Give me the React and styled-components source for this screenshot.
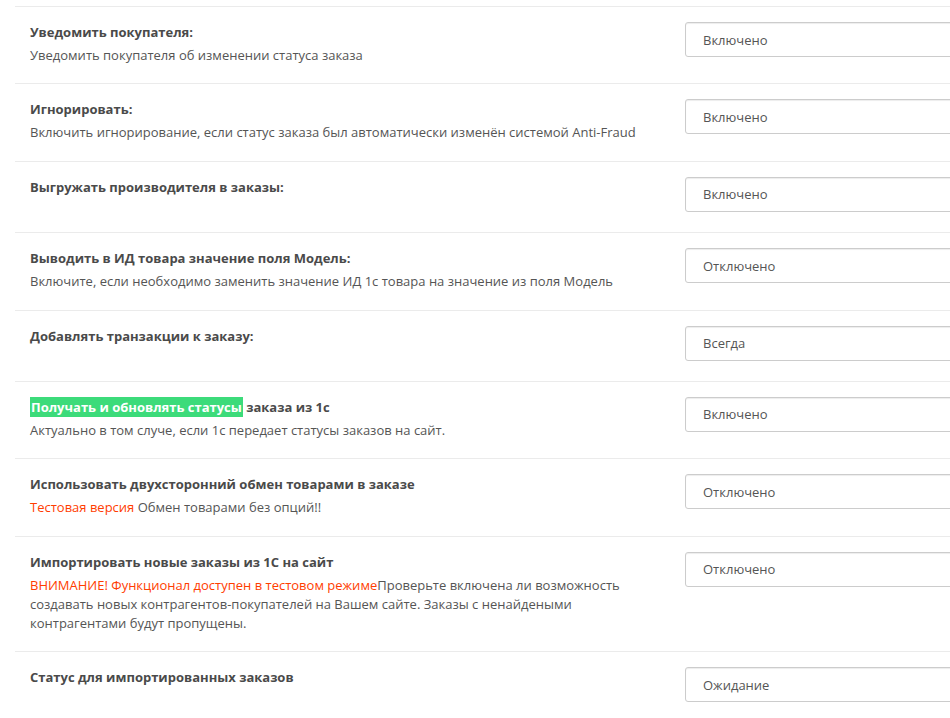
import React from "react";
import styled, { createGlobalStyle } from "styled-components";

const Global = createGlobalStyle`
  html, body { margin: 0; padding: 0; background: #fff; overflow: hidden; }
  body { font-family: "Open Sans", "Liberation Sans", sans-serif; font-size: 13px; color: #555; }
`;

const Page = styled.div`
  width: 1100px;
  padding: 6px 0 0 15px;
`;

const Row = styled.div`
  display: flex;
  border-top: 1px solid #ebebeb;
  padding: 15px 0 18.4px 15px;
`;

const Left = styled.div`
  width: 625px;
  flex: none;
`;

const Title = styled.div`
  font-weight: 700;
  color: #4a4a4a;
  line-height: 20px;
`;

const Desc = styled.div`
  margin-top: 4px;
  line-height: 19px;
  color: #555;
`;

const Mark = styled.span`
  background: #3cdb7a;
  color: #fff;
  padding: 1px 1px;
`;

const Warn = styled.span`
  color: #ff3d00;
`;

const Right = styled.div`
  padding: 0 0 2px 30px;
`;

const Select = styled.div`
  box-sizing: border-box;
  width: 320px;
  height: 35px;
  border: 1px solid #ccc;
  border-radius: 3px;
  box-shadow: inset 0 1px 1px rgba(0, 0, 0, 0.075);
  padding: 0 0 0 17px;
  display: flex;
  align-items: center;
  color: #555;
  line-height: 20px;
`;

const rows = [
  { t: "Уведомить покупателя:", d: "Уведомить покупателя об изменении статуса заказа", v: "Включено" },
  { t: "Игнорировать:", d: "Включить игнорирование, если статус заказа был автоматически изменён системой Anti-Fraud", v: "Включено" },
  { t: "Выгружать производителя в заказы:", v: "Включено" },
  { t: "Выводить в ИД товара значение поля Модель:", d: "Включите, если необходимо заменить значение ИД 1с товара на значение из поля Модель", v: "Отключено" },
  { t: "Добавлять транзакции к заказу:", v: "Всегда" },
  {
    t: (<><Mark>Получать и обновлять статусы</Mark> заказа из 1с</>),
    d: "Актуально в том случе, если 1с передает статусы заказов на сайт.",
    v: "Включено",
  },
  {
    t: "Использовать двухсторонний обмен товарами в заказе",
    d: (<><Warn>Тестовая версия</Warn> Обмен товарами без опций!!</>),
    v: "Отключено",
  },
  {
    t: "Импортировать новые заказы из 1С на сайт",
    d: (<><Warn>ВНИМАНИЕ! Функционал доступен в тестовом режиме</Warn>Проверьте включена ли возможность создавать новых контрагентов-покупателей на Вашем сайте. Заказы с ненайдеными контрагентами будут пропущены.</>),
    v: "Отключено",
  },
  { t: "Статус для импортированных заказов", v: "Ожидание" },
];

export default function App() {
  return (
    <>
      <Global />
      <Page>
        {rows.map((r, i) => (
          <Row key={i}>
            <Left>
              <Title>{r.t}</Title>
              {r.d && <Desc>{r.d}</Desc>}
            </Left>
            <Right>
              <Select>{r.v}</Select>
            </Right>
          </Row>
        ))}
      </Page>
    </>
  );
}
